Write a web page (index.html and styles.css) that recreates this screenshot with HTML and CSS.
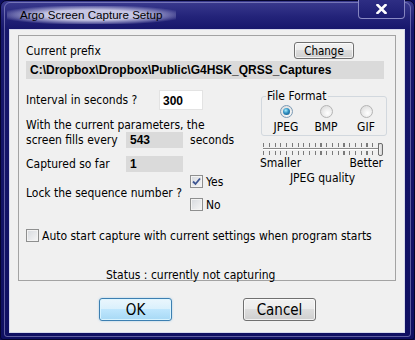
FILE: index.html
```html
<!DOCTYPE html>
<html lang="en">
<head>
    <meta charset="UTF-8">
    <meta name="viewport" content="width=device-width, initial-scale=1.0">
    <title>Argo Screen Capture Setup</title>
    <link rel="stylesheet" href="styles.css">
</head>
<body>
    <div class="window">
        <div class="titlebar">
            <span class="title">Argo Screen Capture Setup</span>
            <span class="close">
                <svg width="11" height="10" viewBox="0 0 11 10">
                    <path d="M1.5 1 L9.5 9 M9.5 1 L1.5 9" stroke="#fff" stroke-width="2.6" stroke-linecap="square"/>
                </svg>
            </span>
        </div>
        <div class="client">
            <div class="group">
                <div class="prefix-row">
                    <span>Current prefix</span>
                    <button class="btn btn-change">Change</button>
                </div>
                <div class="field path">C:\Dropbox\Dropbox\Public\G4HSK_QRSS_Captures</div>

                <div class="columns">
                    <div class="left">
                        <div class="row interval">
                            <span class="lbl-interval">Interval in seconds ?</span>
                            <div class="edit">300</div>
                        </div>
                        <div class="line">With the current parameters, the</div>
                        <div class="row">
                            <span class="lbl-short">screen fills every</span>
                            <div class="field small">543</div>
                            <span class="unit">seconds</span>
                        </div>
                        <div class="row captured">
                            <span class="lbl-short">Captured so far</span>
                            <div class="field small">1</div>
                        </div>
                        <div class="row lock">
                            <span class="lbl-lock">Lock the sequence number ?</span>
                            <div class="checks">
                                <div class="check-item">
                                    <span class="checkbox checked">
                                        <svg width="9" height="9" viewBox="0 0 9 9">
                                            <path d="M1 4.5 L3.5 7 L8 1.5" fill="none" stroke="#3d5592" stroke-width="1.8"/>
                                        </svg>
                                    </span>
                                    <span>Yes</span>
                                </div>
                                <div class="check-item">
                                    <span class="checkbox"></span>
                                    <span>No</span>
                                </div>
                            </div>
                        </div>
                    </div>

                    <div class="right">
                        <fieldset class="format">
                            <legend>File Format</legend>
                            <div class="options">
                                <div class="option"><span class="radio selected"></span><span>JPEG</span></div>
                                <div class="option"><span class="radio"></span><span>BMP</span></div>
                                <div class="option"><span class="radio"></span><span>GIF</span></div>
                            </div>
                        </fieldset>
                        <div class="slider">
                            <div class="ticks"></div>
                            <div class="track"></div>
                            <div class="ticks"></div>
                            <span class="thumb"></span>
                        </div>
                        <div class="slider-labels">
                            <span>Smaller</span>
                            <span>Better</span>
                        </div>
                        <div class="quality">JPEG quality</div>
                    </div>
                </div>

                <div class="check-item auto">
                    <span class="checkbox"></span>
                    <span>Auto start capture with current settings when program starts</span>
                </div>
                <div class="status">Status : currently not capturing</div>
            </div>

            <div class="dialog-buttons">
                <button class="btn btn-big btn-default">OK</button>
                <button class="btn btn-big">Cancel</button>
            </div>
        </div>
    </div>
</body>
</html>
```

FILE: styles.css
```css
body {
    margin: 0;
    font-family: 'DejaVu Sans Condensed', 'DejaVu Sans', sans-serif;
    font-size: 12px;
    color: #000;
    background: #0e0e60;
}

.window {
    position: relative;
    width: 415px;
    height: 340px;
    box-sizing: border-box;
    padding: 0 9px 6px 8px;
    display: flex;
    flex-direction: column;
    border: 1px solid #05052c;
    border-radius: 7px 7px 3px 3px;
    background: linear-gradient(to bottom, #3b3b8f 0, #232379 16px, #17176c 28px, #0f0f62 100%);
}

.window::before {
    content: '';
    position: absolute;
    top: 1px;
    left: 3px;
    right: 3px;
    bottom: 2px;
    border: 1px solid rgba(190, 190, 235, 0.45);
    border-radius: 6px 6px 3px 3px;
    pointer-events: none;
}

.titlebar {
    height: 28px;
    display: flex;
    justify-content: space-between;
    align-items: flex-start;
}

.title {
    margin-top: 5px;
    margin-left: -2px;
    padding: 2px 14px 3px 13px;
    font-family: 'Liberation Sans', Arial, sans-serif;
    font-size: 11.6px;
    color: #000;
    background: radial-gradient(ellipse at center, rgba(225, 225, 245, 0.85) 40%, rgba(200, 200, 235, 0.4) 65%, rgba(150, 150, 210, 0) 80%);
}

.close {
    position: relative;
    width: 45px;
    height: 18px;
    margin-top: -1px;
    display: flex;
    align-items: center;
    justify-content: center;
    border: 1px solid rgba(200, 200, 240, 0.6);
    border-top: none;
    border-radius: 0 0 4px 4px;
    background: linear-gradient(to bottom, #2e2e84, #1c1c72);
}

.client {
    position: relative;
    flex: 1;
    background: #f0f0f0;
    border: 1px solid #d5d8ea;
    display: flex;
    flex-direction: column;
}

.group {
    margin: 5px 8px 0 8px;
    padding: 6px 11px 0 7px;
    border: 1px solid #a3a3a3;
    height: 246px;
    box-sizing: border-box;
}

.prefix-row {
    height: 17px;
    display: flex;
    justify-content: space-between;
    align-items: center;
}

.btn {
    font-family: 'DejaVu Sans Condensed', 'DejaVu Sans', sans-serif;
    color: #000;
    border: 1px solid #707070;
    border-radius: 3px;
    padding: 0;
    background: linear-gradient(to bottom, #f2f2f2 0%, #ebebeb 50%, #dddddd 50%, #cfcfcf 100%);
    box-shadow: inset 0 0 0 1px rgba(255, 255, 255, 0.7);
}

.btn-change {
    width: 60px;
    height: 17px;
    margin-right: 30px;
    font-size: 11.5px;
}

.field {
    background: #dadada;
    box-sizing: border-box;
    font-family: 'Liberation Sans', Arial, sans-serif;
    font-size: 12px;
    font-weight: bold;
}

.path {
    margin-top: 2px;
    height: 18px;
    line-height: 18px;
    padding-left: 4px;
}

.columns {
    margin-top: 11px;
    display: flex;
}

.left {
    width: 235px;
}

.row {
    display: flex;
    align-items: center;
}

.lbl-interval {
    width: 133px;
}

.edit {
    width: 44px;
    height: 20px;
    line-height: 20px;
    box-sizing: border-box;
    padding-left: 3px;
    background: #fff;
    border: 1px solid #e3e3e3;
    font-family: 'Liberation Sans', Arial, sans-serif;
    font-size: 12px;
    font-weight: bold;
}

.line {
    margin-top: 8px;
    line-height: 14px;
}

.lbl-short {
    width: 100px;
}

.field.small {
    width: 57px;
    height: 16px;
    line-height: 16px;
    padding-left: 4px;
}

.unit {
    margin-left: 7px;
}

.captured {
    margin-top: 8px;
}

.lock {
    margin-top: 3px;
}

.lbl-lock {
    width: 164px;
    white-space: nowrap;
}

.checks {
    display: flex;
    flex-direction: column;
    gap: 10px;
}

.check-item {
    display: flex;
    align-items: center;
    gap: 3px;
    height: 13px;
}

.checkbox {
    flex: none;
    width: 13px;
    height: 13px;
    box-sizing: border-box;
    border: 1px solid #8e8f8f;
    background: linear-gradient(135deg, #d6d9de 0%, #f6f6f6 100%);
    box-shadow: inset 0 0 0 1px #f3f3f3;
    display: flex;
    align-items: center;
    justify-content: center;
}

.right {
    width: 123px;
    margin-top: -1px;
}

.format {
    margin: 0;
    padding: 0;
    border: 1px solid #d2d8de;
    border-radius: 3px;
    height: 47px;
    box-sizing: border-box;
}

.format legend {
    margin-left: 4px;
    padding: 0 2px 0 1px;
    line-height: 14px;
}

.options {
    display: grid;
    grid-template-columns: repeat(3, 40px);
    padding-left: 4px;
    margin-top: 2px;
}

.option {
    display: flex;
    flex-direction: column;
    align-items: center;
    gap: 2px;
    line-height: 14px;
}

.radio {
    width: 13px;
    height: 13px;
    box-sizing: border-box;
    border: 1px solid #b4b4b4;
    border-radius: 50%;
    background: radial-gradient(circle at 60% 65%, #ffffff 0%, #e6e6e6 60%, #d6d6d6 100%);
    display: flex;
    align-items: center;
    justify-content: center;
}

.radio.selected {
    border-color: #7b9ab5;
}

.radio.selected::after {
    content: '';
    width: 7px;
    height: 7px;
    border-radius: 50%;
    background: radial-gradient(circle at 40% 35%, #a6f0ff 0%, #2f8dc0 45%, #0d4f7e 100%);
}

.slider {
    position: relative;
    margin-top: 7px;
    height: 13px;
    display: flex;
    flex-direction: column;
    gap: 1px;
}

.ticks {
    height: 4px;
    margin: 0 5px 0 2px;
    background: repeating-linear-gradient(to right, #7a7a7a 0, #7a7a7a 1px, transparent 1px, transparent 5.75px);
}

.track {
    height: 1px;
    margin: 0 4px 0 2px;
    border-top: 1px solid #8a8a8a;
    background: #fff;
}

.thumb {
    position: absolute;
    right: 1px;
    top: 0;
    width: 5px;
    height: 13px;
    box-sizing: border-box;
    border: 1px solid #6d6d6d;
    border-radius: 2px;
    background: linear-gradient(to right, #f4f4f4, #d4d4d4);
}

.slider-labels {
    display: flex;
    justify-content: space-between;
    line-height: 14px;
    margin-left: -1px;
    margin-right: 1px;
}

.quality {
    text-align: center;
    line-height: 14px;
    margin-top: 1px;
}

.auto {
    margin-top: 18px;
}

.status {
    margin-top: 26px;
    margin-left: 80px;
    line-height: 14px;
}

.dialog-buttons {
    display: flex;
    gap: 71px;
    margin-top: 17px;
    padding-left: 89px;
}

.btn-big {
    width: 73px;
    height: 23px;
    font-size: 15px;
}

.btn-default {
    border-color: #3c7fb1;
    background: linear-gradient(to bottom, #eaf6fd 0%, #d9f0fc 50%, #bee6fd 50%, #a7d9f5 100%);
    box-shadow: inset 0 0 0 1px rgba(220, 245, 255, 0.9), 0 0 2px rgba(90, 170, 230, 0.6);
}
```
